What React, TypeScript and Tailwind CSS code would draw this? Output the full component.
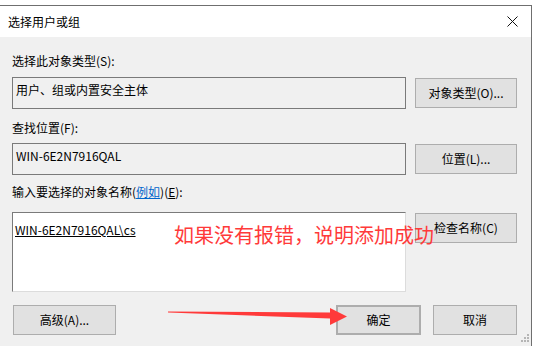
import React from 'react';

const font = { fontFamily: '"Noto Sans CJK SC", "Noto Sans", sans-serif' };

function Btn({ children, className = '' }: { children: React.ReactNode; className?: string }) {
  return (
    <div
      className={`h-[30px] flex items-center justify-center bg-[#e1e1e1] border border-[#adadad] text-[12px] leading-4 text-black ${className}`}
    >
      {children}
    </div>
  );
}

export default function App() {
  return (
    <div className="relative w-[534px] h-[346px] bg-white overflow-hidden" style={font}>
      <div className="pt-[5px]">
        <div className="w-[532px] h-[341px] border-t border-r border-[#6f6f6f] flex flex-col">
          {/* title bar */}
          <div className="h-[31px] bg-white flex items-center justify-between pl-2 pr-[13px] shrink-0">
            <span className="text-[12px] leading-4 text-black">选择用户或组</span>
            <svg width="11" height="11" viewBox="0 0 11 11">
              <path d="M0.5 0.5 L10.5 10.5 M10.5 0.5 L0.5 10.5" stroke="#111" strokeWidth="1" fill="none" />
            </svg>
          </div>

          {/* body */}
          <div className="flex-1 bg-[#f0f0f0] pl-3 pr-[14px] pt-4 text-[12px] leading-4 text-black">
            <div>选择此对象类型(S):</div>
            <div className="mt-2 flex items-center gap-[9px]">
              <div className="w-[394px] h-[32px] border border-[#7a7a7a] pl-[3px] pt-[4px]">用户、组或内置安全主体</div>
              <Btn className="w-[102px]">对象类型(O)...</Btn>
            </div>

            <div className="mt-[11px]">查找位置(F):</div>
            <div className="mt-[7px] flex items-center gap-[9px]">
              <div className="w-[394px] h-[32px] border border-[#7a7a7a] pl-[3px] pt-[4px]">WIN-6E2N7916QAL</div>
              <Btn className="w-[102px]">位置(L)...</Btn>
            </div>

            <div className="mt-[9px]">
              输入要选择的对象名称(<span className="text-[#0066cc] underline">例如</span>)(<span className="underline">E</span>):
            </div>
            <div className="mt-[12px] flex items-start gap-[9px]">
              <div className="w-[394px] h-[80px] bg-white border border-t-[#7a7a7a] border-l-[#7a7a7a] border-r-[#dcdcdc] border-b-[#dcdcdc] pl-[2px] pt-[9px]">
                <span className="underline">WIN-6E2N7916QAL\cs</span>
              </div>
              <Btn className="w-[102px] mt-px">检查名称(C)</Btn>
            </div>

            <div className="mt-[13px] flex items-center">
              <Btn className="w-[103px] ml-px">高级(A)...</Btn>
              <div className="flex-1" />
              <Btn className="w-[85px] border-2 border-[#0078d7]">确定</Btn>
              <Btn className="w-[84px] ml-[12px]">取消</Btn>
            </div>
          </div>
        </div>
      </div>

      {/* annotation */}
      <div className="absolute left-[174px] top-[223px] text-[20px] leading-6 text-[#ff3a3a] whitespace-nowrap">
        如果没有报错，说明添加成功
      </div>
      <svg className="absolute left-0 top-0" width="534" height="346" viewBox="0 0 534 346">
        <polygon
          points="168,311.6 330,312.5 330,308 347,316.5 330,325 330,318.5 168,312.6"
          fill="#ff3a3a"
        />
        <g fill="#b5b5b5">
          <rect x="527" y="334" width="2" height="2" />
          <rect x="524" y="337" width="2" height="2" />
          <rect x="527" y="337" width="2" height="2" />
          <rect x="521" y="340" width="2" height="2" />
          <rect x="524" y="340" width="2" height="2" />
          <rect x="527" y="340" width="2" height="2" />
        </g>
      </svg>
    </div>
  );
}
